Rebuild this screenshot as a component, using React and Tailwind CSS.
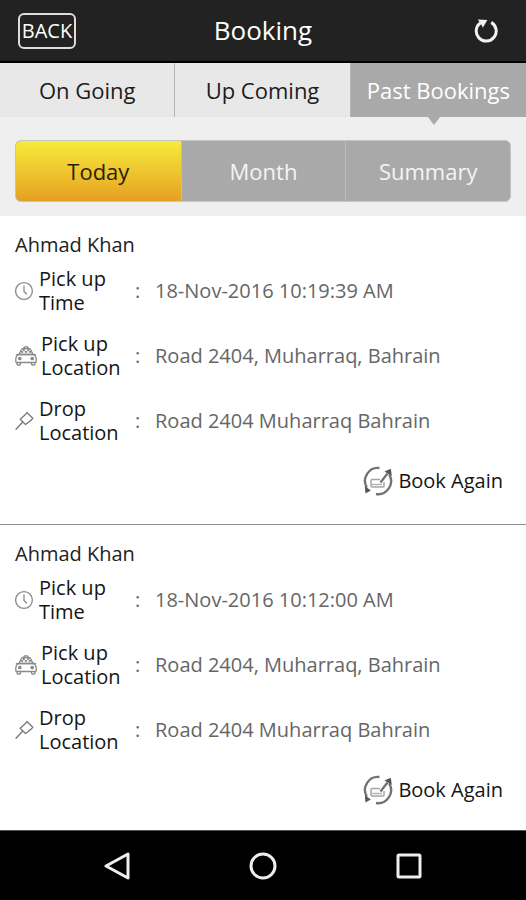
import React, { useState } from 'react';

const TABS = ['On Going', 'Up Coming', 'Past Bookings'];
const PERIODS = ['Today', 'Month', 'Summary'];

const BOOKINGS = [
  {
    id: 1,
    name: 'Ahmad Khan',
    time: '18-Nov-2016 10:19:39 AM',
    pickup: 'Road 2404, Muharraq, Bahrain',
    drop: 'Road 2404 Muharraq Bahrain',
  },
  {
    id: 2,
    name: 'Ahmad Khan',
    time: '18-Nov-2016 10:12:00 AM',
    pickup: 'Road 2404, Muharraq, Bahrain',
    drop: 'Road 2404 Muharraq Bahrain',
  },
];

const RefreshIcon = () => (
  <svg className="w-6 h-6" viewBox="0 0 24 24" fill="none" aria-hidden="true">
    <path d="M17.2 3.4A10 10 0 1 1 6.6 3.8" stroke="#f2f2f2" strokeWidth="3" />
    <path d="M3.8 0.4 13.4 1 8.8 8.8 7.4 5.4Z" fill="#f2f2f2" />
  </svg>
);

const ClockIcon = () => (
  <svg className="w-5 h-5" viewBox="0 0 20 20" fill="none" stroke="#8a8a8a" strokeLinecap="round" aria-hidden="true">
    <circle cx="9" cy="10" r="8.4" strokeWidth="1.3" />
    <path d="M9 5v5.500l2.500 2.500" strokeWidth="1.300" />
  </svg>
);

const TaxiIcon = () => (
  <svg className="w-[22px] h-5" viewBox="0 0 22 20" fill="none" stroke="#8a8a8a" strokeWidth="1.300" strokeLinejoin="round" aria-hidden="true">
    <path d="M8.500 2.500 9.500.8h3l1 1.700" />
    <path d="M4 8.500 6 4.200Q6.800 2.500 8.500 2.500h5q1.700 0 2.500 1.700L18 8.500Z" />
    <path d="M5.800 5.800h2.400M9.800 5.800h2.400M13.800 5.800h2.400M7.800 4h2M12.200 4h2" strokeWidth="1.800" />
    <path d="M4.500 8.200.8 8.800M17.500 8.200l3.700.6" />
    <path d="M4 8.500Q.8 9.800.8 13v2.800q0 .7.800.7h18.800q.8 0 .8-.7V13q0-3.200-3.200-4.500Z" />
    <path d="M2 16.500v1.500q0 1 1 1h1.500q1 0 1-1v-1.500M16.500 16.500v1.500q0 1 1 1H19q1 0 1-1v-1.500" />
    <circle cx="4.800" cy="12.500" r="1.200" fill="#8a8a8a" />
    <circle cx="17.200" cy="12.500" r="1.200" fill="#8a8a8a" />
  </svg>
);

const PinIcon = () => (
  <svg className="w-5 h-5" viewBox="0 0 20 20" fill="none" stroke="#777" strokeWidth="1.300" strokeLinejoin="round" strokeLinecap="round" aria-hidden="true">
    <path d="M11.800 1.500 17.800 7.300 16 9.200 12.300 12.300 10.500 13.500 5.200 8.300 6.800 6.800 10.200 3.800Z" />
    <path d="M7.500 11.200 1 18.200" />
  </svg>
);

const BookAgainIcon = () => (
  <svg className="w-8 h-8" viewBox="0 0 32 32" fill="none" aria-hidden="true">
    <g stroke="#737373" strokeWidth="2.400">
      <path d="M17.500 3A13 13 0 0 0 4.800 22.500" />
      <path d="M14 29A13 13 0 0 0 27.200 9.500" />
    </g>
    <path d="M2.800 21 8.800 25.500 3.500 28.500Z" fill="#555" />
    <path d="M22.500 6.500 28.800 3.800 29.800 11Z" fill="#555" />
    <path d="M18 14.500h-8q-1 0-1 1V21q0 1 1 1h11q1 0 1-1v-4" stroke="#a5a5a5" strokeWidth="1.500" />
    <path d="M10 19.500h10" stroke="#b5b5b5" strokeWidth="1.500" />
    <path d="M18.500 17.500 25.500 8.500" stroke="#707070" strokeWidth="2.200" />
  </svg>
);

const BookingRow = ({ icon, label, value, labelClass }) => (
  <div className="flex items-center h-[65px]">
    <dt className="flex items-center w-[120px] shrink-0 leading-6 text-[#151515]">
      {icon}
      <span className={labelClass}>{label}</span>
    </dt>
    <dd className="flex min-w-0 text-[#666]">
      <span className="w-5 shrink-0">:</span>
      <span>{value}</span>
    </dd>
  </div>
);

const BookingCard = ({ booking }) => (
  <li className="px-[15px] pt-4 pb-[15px] border-b border-[#8f8f8f]">
    <h2 className="leading-[26px] text-[#222]">{booking.name}</h2>
    <dl>
      <BookingRow icon={<ClockIcon />} label="Pick up Time" value={booking.time} labelClass="w-[72px] ml-1" />
      <BookingRow icon={<TaxiIcon />} label="Pick up Location" value={booking.pickup} labelClass="w-20 ml-1" />
      <BookingRow icon={<PinIcon />} label="Drop Location" value={booking.drop} labelClass="w-20 ml-1" />
    </dl>
    <div className="flex justify-end h-14 pr-2">
      <button className="flex items-center gap-1 text-[#151515]">
        <BookAgainIcon />
        Book Again
      </button>
    </div>
  </li>
);

const App = () => {
  const [tab, setTab] = useState('Past Bookings');
  const [period, setPeriod] = useState('Today');

  return (
    <div className="flex flex-col h-screen bg-white text-xl font-['Open_Sans','Noto_Sans',sans-serif]">
      {/* Header */}
      <header className="grid grid-cols-3 items-center h-[63px] shrink-0 px-[18px] bg-[#222] border-b-2 border-black text-white">
        <button className="justify-self-start w-[58px] h-9 border-2 border-[#ddd] rounded-md text-xl leading-none">
          BACK
        </button>
        <h1 className="text-center text-[26px]">Booking</h1>
        <button className="justify-self-end mr-2.5" aria-label="Refresh">
          <RefreshIcon />
        </button>
      </header>

      {/* Tabs */}
      <nav className="grid grid-cols-3 h-[54px] shrink-0 bg-[#e8e8e8] text-[22px]">
        {TABS.map((item) => (
          <button
            key={item}
            onClick={() => setTab(item)}
            className={
              tab === item
                ? 'relative bg-[#a9a9a9] text-white whitespace-nowrap'
                : 'border-r border-[#b5b5b5] text-[#1c1c1c] whitespace-nowrap'
            }
          >
            {item}
            {tab === item && (
              <span className="absolute top-full left-1/2 -ml-2.5 border-x-6 border-t-8 border-x-transparent border-t-[#a9a9a9]" />
            )}
          </button>
        ))}
      </nav>

      {/* Period filter */}
      <div className="shrink-0 px-[15px] pt-[23px] pb-3.5 bg-[#efefef]">
        <div className="grid grid-cols-3 h-[62px] border border-[#c4c4c4] rounded-md overflow-hidden bg-[#a9a9a9] text-[22px]">
          {PERIODS.map((item) => (
            <button
              key={item}
              onClick={() => setPeriod(item)}
              className={
                period === item
                  ? 'bg-linear-to-b from-[#f5ec3c] to-[#e5a020] text-[#2a2208]'
                  : 'border-l border-[#bdbdbd] text-[#f4f4f4]'
              }
            >
              {item}
            </button>
          ))}
        </div>
      </div>

      {/* Bookings */}
      <main className="flex-1 min-h-0 overflow-hidden">
        <ul>
          {BOOKINGS.map((booking) => (
            <BookingCard key={booking.id} booking={booking} />
          ))}
        </ul>
      </main>

      {/* Android navigation bar */}
      <footer className="flex items-center justify-center gap-[118px] h-[70px] shrink-0 bg-black border-t border-[#555]">
        <button aria-label="Back">
          <svg className="w-7 h-7" viewBox="0 0 28 28" fill="none" stroke="#eee" strokeWidth="3" strokeLinejoin="round">
            <path d="M25 2v24L3 14Z" />
          </svg>
        </button>
        <button aria-label="Home">
          <svg className="w-7 h-7" viewBox="0 0 28 28" fill="none" stroke="#eee" strokeWidth="3">
            <circle cx="14" cy="14" r="12" />
          </svg>
        </button>
        <button aria-label="Recent apps">
          <svg className="w-7 h-7" viewBox="0 0 28 28" fill="none" stroke="#eee" strokeWidth="3">
            <rect x="3" y="3" width="22" height="22" rx="1" />
          </svg>
        </button>
      </footer>
    </div>
  );
};

export default App;
